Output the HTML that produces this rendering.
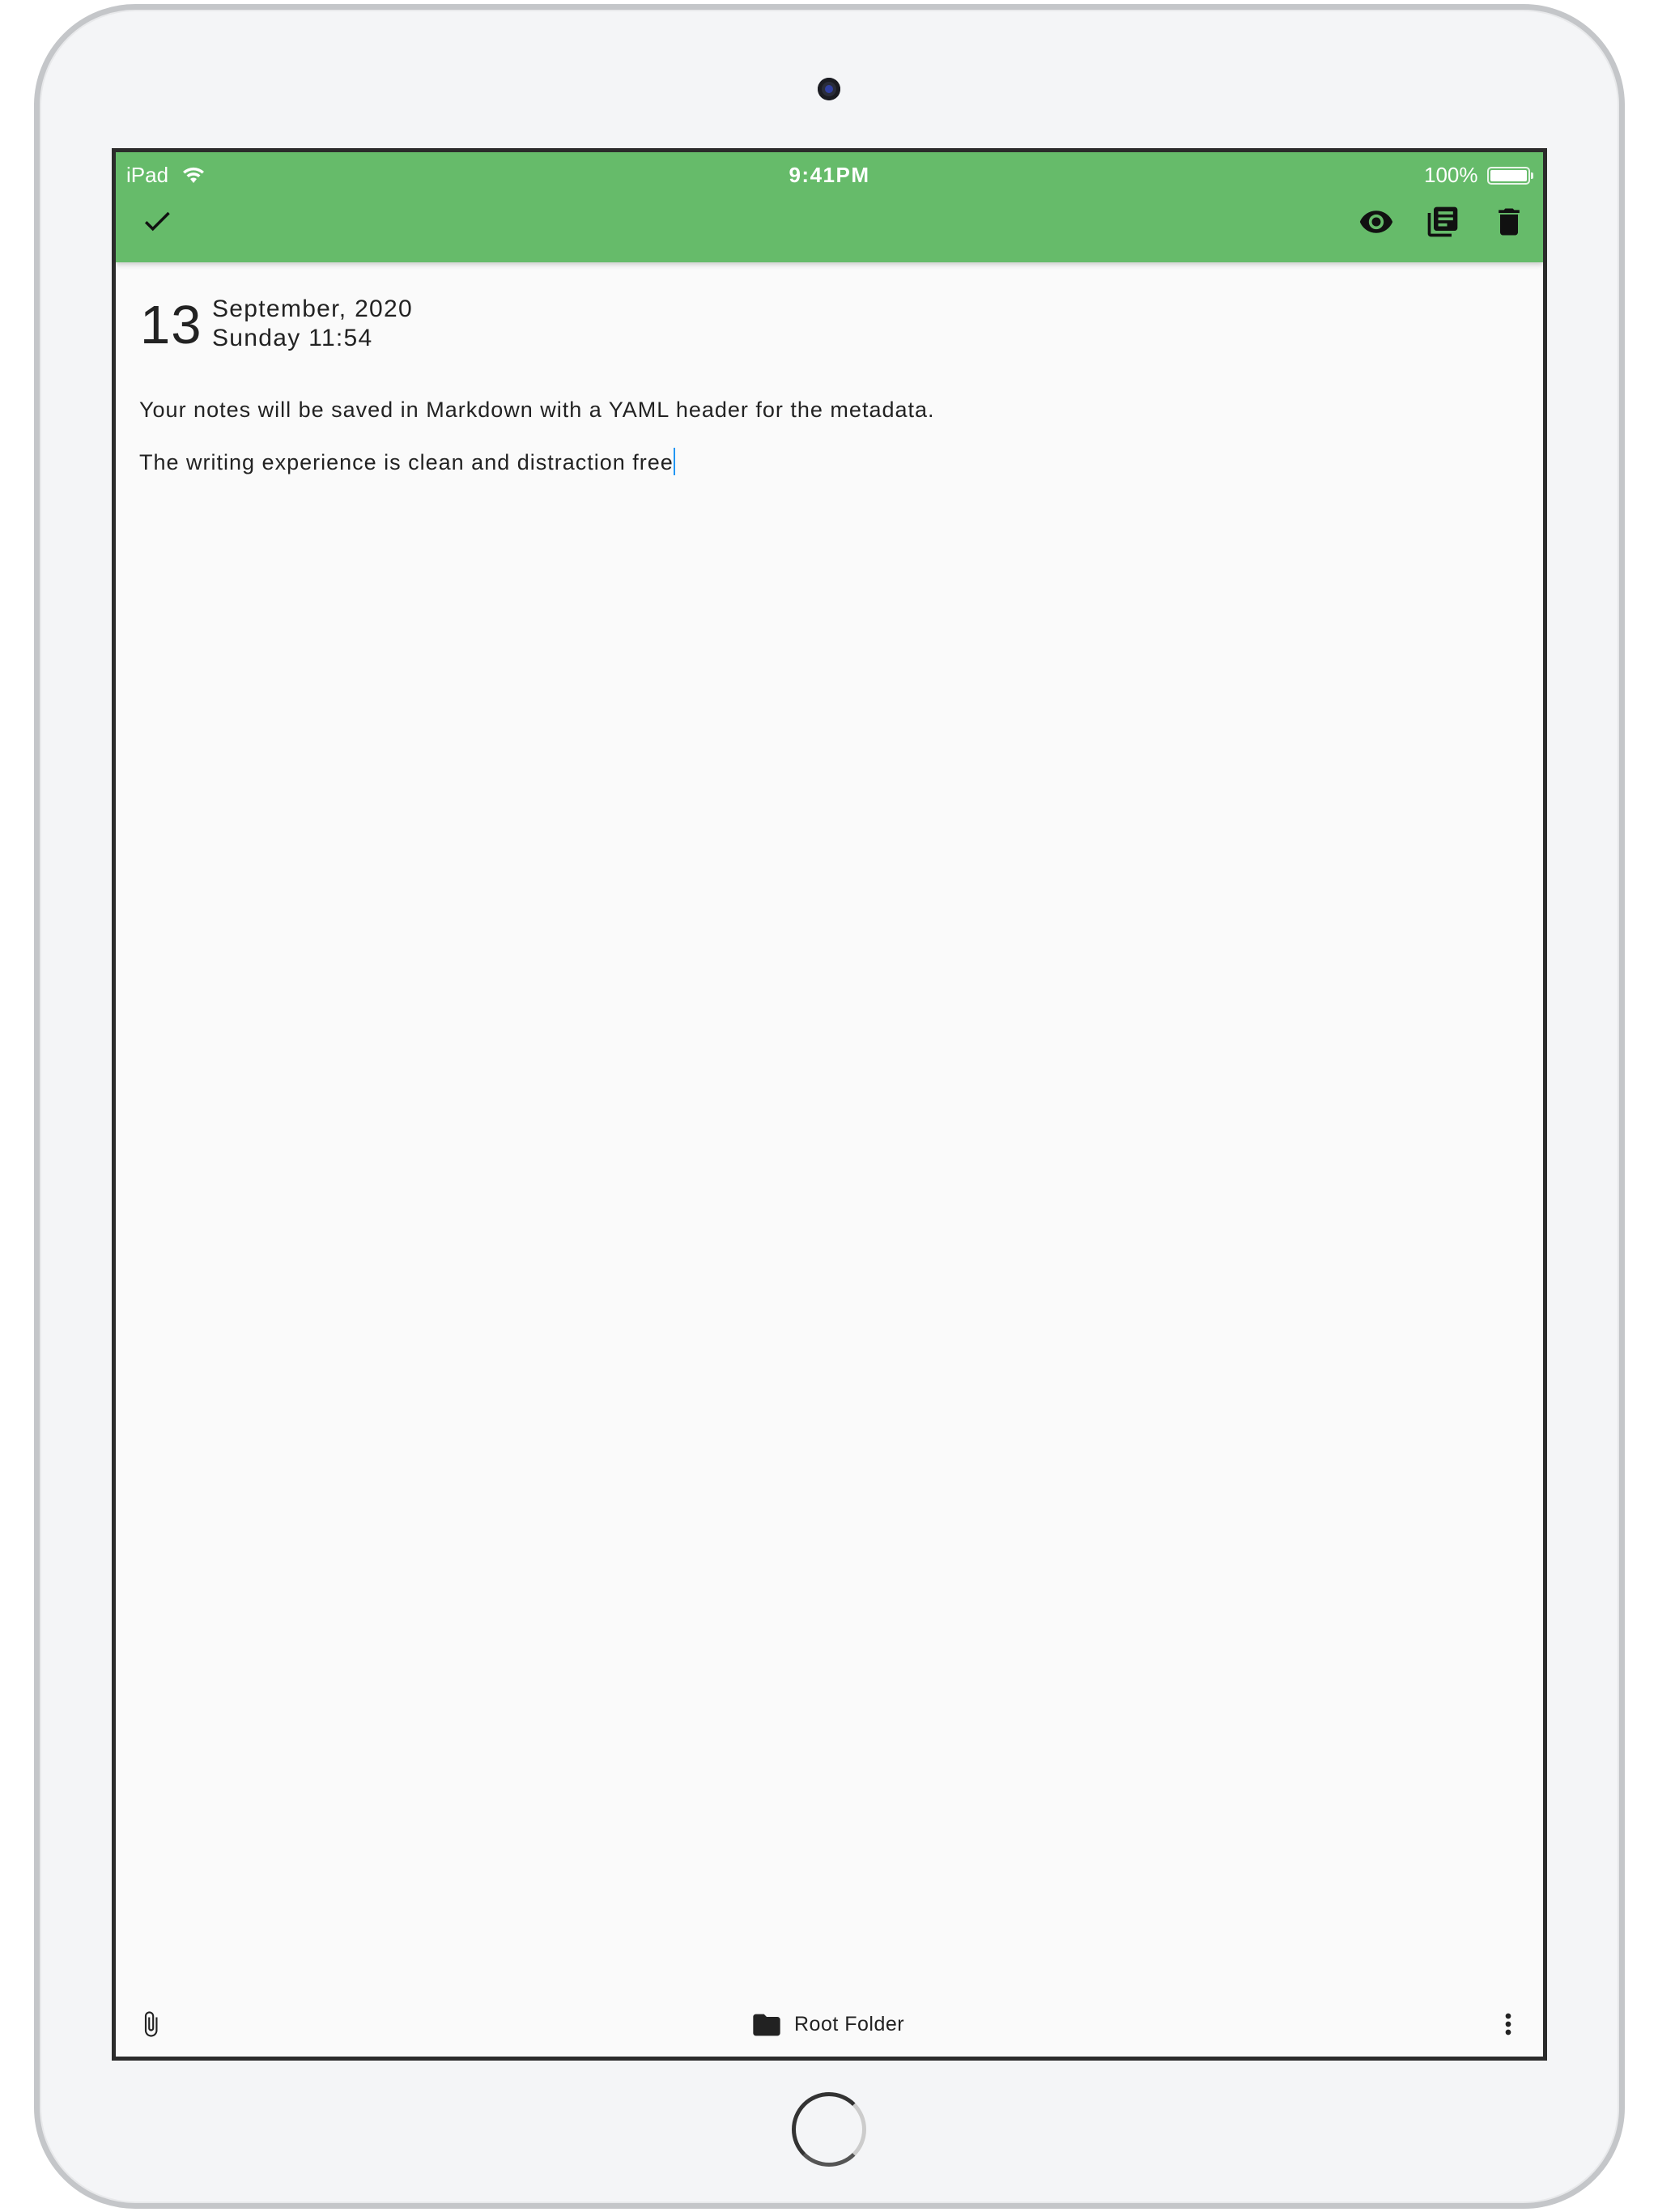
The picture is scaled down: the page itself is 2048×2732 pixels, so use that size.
<!DOCTYPE html>
<html><head><meta charset="utf-8"><style>
*{margin:0;padding:0;box-sizing:border-box}
html,body{width:2048px;height:2732px;background:#fff;overflow:hidden;font-family:"Liberation Sans",sans-serif}
.dev{position:absolute;left:42px;top:5px;width:1965px;height:2723px;border-radius:125px;background:#f4f5f7;border:7px solid #c4c6c9;box-shadow:inset 0 0 0 2px #e8e9eb}
.cam{position:absolute;left:1010px;top:96px;width:28px;height:28px;border-radius:50%;background:#2a2d3a;box-shadow:inset 0 0 0 5px #1b1c22}
.cam:after{content:"";position:absolute;left:9px;top:9px;width:10px;height:10px;border-radius:50%;background:#3140a0}
.scr{position:absolute;left:138px;top:183px;width:1773px;height:2362px;border:5px solid #2b2b2b;background:#fafafa;overflow:hidden}
.bar{position:absolute;left:0;top:0;width:100%;height:136px;background:#66bb6a;box-shadow:0 3px 6px rgba(0,0,0,.18)}
.st{position:absolute;color:#fff;font-size:26px;top:13px}
.txt{position:absolute;color:#222;white-space:nowrap}
.home{position:absolute;left:978px;top:2584px;width:92px;height:92px;border-radius:50%;border:5px solid #333;border-right-color:#ccc;border-bottom-color:#555}
</style></head><body>
<div class="dev"></div>
<div class="cam"></div>
<div class="home"></div>
<div class="scr">
 <div class="bar">
  <div class="st" style="left:13px">iPad</div>
  <svg style="position:absolute;left:81px;top:15px" width="30" height="26" viewBox="0 0 30 26"><path d="M2 9a19 19 0 0 1 26 0l-2.5 2.5a15.5 15.5 0 0 0-21 0z M6.5 13.5a12.5 12.5 0 0 1 17 0L21 16a9 9 0 0 0-12 0z M11 18a6 6 0 0 1 8 0l-4 5z" fill="#fff"/></svg>
  <div class="st" style="left:0;width:100%;text-align:center;font-weight:bold;letter-spacing:1.5px">9:41PM</div>
  <div class="st" style="left:1616px">100%</div>
  <div style="position:absolute;left:1694px;top:18px;width:53px;height:22px;border:2px solid #e8f5e9;border-radius:5px;padding:2px"><div style="width:100%;height:100%;background:#fff;border-radius:2px"></div></div>
  <div style="position:absolute;left:1748px;top:25px;width:3px;height:8px;background:#e8f5e9;border-radius:0 2px 2px 0"></div>
  <svg style="position:absolute;left:30px;top:64px" width="42" height="42" viewBox="0 0 24 24"><path d="M9 16.17L4.83 12l-1.42 1.41L9 19 21 7l-1.41-1.41z" fill="#111"/></svg>
  <svg style="position:absolute;left:1535px;top:64px" width="44" height="44" viewBox="0 0 24 24"><path d="M12 4.5C7 4.5 2.73 7.61 1 12c1.730 4.39 6 7.5 11 7.5s9.27-3.11 11-7.5c-1.73-4.39-6-7.5-11-7.5zM12 17c-2.76 0-5-2.24-5-5s2.24-5 5-5 5 2.24 5 5-2.24 5-5 5zm0-8c-1.66 0-3 1.34-3 3s1.34 3 3 3 3-1.34 3-3-1.34-3-3-3z" fill="#111"/></svg>
  <svg style="position:absolute;left:1617px;top:64px" width="44" height="44" viewBox="0 0 24 24"><path d="M4 6H2v14c0 1.1.9 2 2 2h14v-2H4V6zm16-4H8c-1.1 0-2 .9-2 2v12c0 1.1.9 2 2 2h12c1.1 0 2-.9 2-2V4c0-1.1-.9-2-2-2zm-1 9H9V9h10v2zm-4 4H9v-2h6v2zm4-8H9V5h10v2z" fill="#111"/></svg>
  <svg style="position:absolute;left:1699px;top:64px" width="44" height="44" viewBox="0 0 24 24"><path d="M6 19c0 1.1.9 2 2 2h8c1.1 0 2-.9 2-2V7H6v12zM19 4h-3.5l-1-1h-5l-1 1H5v2h14V4z" fill="#111"/></svg>
 </div>
 <div class="txt" style="left:30px;top:174px;font-size:67px;line-height:80px;letter-spacing:1px">13</div>
 <div class="txt" style="left:119px;top:176px;font-size:30px;line-height:36px;letter-spacing:1.3px">September, 2020</div>
 <div class="txt" style="left:119px;top:212px;font-size:30px;line-height:36px;letter-spacing:1.3px">Sunday 11:54</div>
 <div class="txt" style="left:29px;top:300px;font-size:27px;line-height:36px;letter-spacing:1px">Your notes will be saved in Markdown with a YAML header for the metadata.</div>
 <div class="txt" style="left:29px;top:365px;font-size:27px;line-height:36px;letter-spacing:1px">The writing experience is clean and distraction free<span style="display:inline-block;width:2px;height:34px;background:#2196f3;vertical-align:-7px"></span></div>
 <svg style="position:absolute;left:26px;top:2292px" width="34" height="40" viewBox="0 0 24 24"><path d="M16.5 6v11.5c0 2.21-1.79 4-4 4s-4-1.79-4-4V5c0-1.38 1.12-2.5 2.5-2.5s2.5 1.12 2.5 2.5v10.5c0 .55-.45 1-1 1s-1-.45-1-1V6H10v9.5c0 1.38 1.12 2.5 2.5 2.5s2.5-1.12 2.5-2.5V5c0-2.21-1.790-4-4-4S7 2.79 7 5v12.5c0 3.04 2.46 5.5 5.5 5.5s5.5-2.46 5.5-5.5V6h-1.5z" fill="#222"/></svg>
 <svg style="position:absolute;left:784px;top:2293px" width="40" height="40" viewBox="0 0 24 24"><path d="M10 4H4c-1.1 0-2 .9-2 2v12c0 1.1.9 2 2 2h16c1.1 0 2-.9 2-2V8c0-1.1-.9-2-2-2h-8l-2-2z" fill="#222"/></svg>
 <div class="txt" style="left:838px;top:2297px;font-size:25px;line-height:30px;letter-spacing:.5px">Root Folder</div>
 <svg style="position:absolute;left:1700px;top:2292px" width="40" height="40" viewBox="0 0 24 24"><path d="M12 8c1.1 0 2-.9 2-2s-.9-2-2-2-2 .9-2 2 .9 2 2 2zm0 2c-1.1 0-2 .9-2 2s.9 2 2 2 2-.9 2-2-.9-2-2-2zm0 6c-1.1 0-2 .9-2 2s.9 2 2 2 2-.9 2-2-.9-2-2-2z" fill="#222"/></svg>
</div>
</body></html>
